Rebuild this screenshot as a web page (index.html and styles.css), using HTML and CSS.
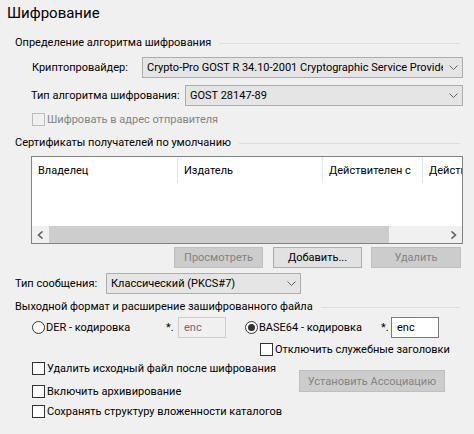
FILE: index.html
```html
<!DOCTYPE html>
<html lang="ru">
<head>
<meta charset="utf-8">
<link rel="stylesheet" href="styles.css">
</head>
<body>
<div class="page">
  <h1 class="title">Шифрование</h1>

  <div class="group-head group-head-1"><span>Определение алгоритма шифрования</span><i class="rule"></i></div>

  <div class="row row-provider">
    <span class="label">Криптопровайдер:</span>
    <div class="combo combo-provider"><span class="combo-text">Crypto-Pro GOST R 34.10-2001 Cryptographic Service Provider</span><svg class="chev" width="9" height="5" viewBox="0 0 9 5"><polyline points="0.5,0.5 4.5,4.5 8.5,0.5" fill="none" stroke="#606060" stroke-width="1"/></svg></div>
  </div>

  <div class="row row-alg">
    <span class="label">Тип алгоритма шифрования:</span>
    <div class="combo combo-alg"><span class="combo-text">GOST 28147-89</span><svg class="chev" width="9" height="5" viewBox="0 0 9 5"><polyline points="0.5,0.5 4.5,4.5 8.5,0.5" fill="none" stroke="#606060" stroke-width="1"/></svg></div>
  </div>

  <label class="check check-disabled check-sender"><span class="box"></span><span>Шифровать в адрес отправителя</span></label>

  <div class="group-head group-head-2"><span>Сертификаты получателей по умолчанию</span><i class="rule"></i></div>

  <div class="list">
    <div class="list-head">
      <div class="col col-1">Владелец</div>
      <div class="col col-2">Издатель</div>
      <div class="col col-3">Действителен с</div>
      <div class="col col-4">Действителен по</div>
    </div>
    <div class="list-body"></div>
    <div class="hscroll">
      <div class="arrow arrow-left"><svg width="7" height="8" viewBox="0 0 7 8"><polyline points="5.5,0.5 1.5,4 5.5,7.5" fill="none" stroke="#606060" stroke-width="1.6"/></svg></div>
      <div class="thumb"></div>
      <div class="track"></div>
      <div class="arrow arrow-right"><svg width="7" height="8" viewBox="0 0 7 8"><polyline points="1.5,0.5 5.5,4 1.5,7.5" fill="none" stroke="#606060" stroke-width="1.6"/></svg></div>
    </div>
  </div>

  <div class="btn-row">
    <div class="btn btn-disabled btn-view">Просмотреть</div>
    <div class="btn btn-add">Добавить...</div>
    <div class="btn btn-disabled btn-del">Удалить</div>
  </div>

  <div class="row row-msg">
    <span class="label">Тип сообщения:</span>
    <div class="combo combo-msg"><span class="combo-text">Классический (PKCS#7)</span><svg class="chev" width="9" height="5" viewBox="0 0 9 5"><polyline points="0.5,0.5 4.5,4.5 8.5,0.5" fill="none" stroke="#606060" stroke-width="1"/></svg></div>
  </div>

  <div class="group-head group-head-3"><span>Выходной формат и расширение зашифрованного файла</span><i class="rule"></i></div>

  <div class="format-row">
    <label class="radio radio-der"><span class="circle"></span><span>DER - кодировка</span></label>
    <span class="ext-star ext-star-der">*.</span>
    <div class="ext ext-disabled">enc</div>
    <label class="radio radio-b64"><span class="circle checked"></span><span>BASE64 - кодировка</span></label>
    <span class="ext-star ext-star-b64">*.</span>
    <div class="ext ext-active">enc</div>
  </div>

  <label class="check check-headers"><span class="box"></span><span>Отключить служебные заголовки</span></label>

  <div class="options">
    <div class="opt-col">
      <label class="check check-opt1"><span class="box"></span><span>Удалить исходный файл после шифрования</span></label>
      <label class="check check-opt2"><span class="box"></span><span>Включить архивирование</span></label>
      <label class="check check-opt3"><span class="box"></span><span>Сохранять структуру вложенности каталогов</span></label>
    </div>
    <div class="btn btn-disabled btn-assoc">Установить Ассоциацию</div>
  </div>
</div>
</body>
</html>
```

FILE: styles.css
```css
html, body {
  margin: 0;
  padding: 0;
  background: #f0f0f0;
}
body {
  width: 474px;
  height: 434px;
  overflow: hidden;
  font-family: Roboto, "Liberation Sans", sans-serif;
  font-size: 11px;
  color: #000;
}
.page {
  display: flex;
  flex-direction: column;
}
.title {
  box-sizing: border-box;
  margin: 0;
  padding: 2px 0 0 7px;
  height: 30px;
  font-size: 15px;
  font-weight: normal;
  line-height: 22px;
}

.group-head {
  display: flex;
  align-items: center;
  padding-left: 15px;
  padding-right: 14px;
  height: 16px;
  line-height: 16px;
  white-space: nowrap;
  flex: none;
}
.group-head .rule {
  flex: 1;
  height: 1px;
  background: #dcdcdc;
  margin-left: 8px;
  margin-top: 1px;
}
.group-head-1 { margin-top: 5px; }
.group-head-2 { margin-top: 9px; }
.group-head-3 { margin-top: 5px; }

.row {
  display: flex;
  align-items: center;
  white-space: nowrap;
  height: 21px;
  flex: none;
}
.label { display: block; flex: none; }
.row-provider { margin-top: 6px; padding-left: 32px; }
.row-provider .label { width: 110px; }
.row-alg { margin-top: 7px; padding-left: 31px; }
.row-alg .label { width: 154px; }
.row-msg { margin-top: 5px; padding-left: 15px; }
.row-msg .label { width: 91px; }

.combo {
  box-sizing: border-box;
  height: 21px;
  border: 1px solid #adadad;
  background: #e5e5e5;
  display: flex;
  align-items: center;
  padding-left: 4px;
  padding-right: 4px;
  overflow: hidden;
  flex: none;
}
.combo-text {
  flex: 1;
  overflow: hidden;
  white-space: nowrap;
}
.chev { flex: none; margin-left: 6px; }
.combo-provider { width: 321px; }
.combo-alg { width: 278px; }
.combo-msg { width: 195px; }

.check, .radio {
  display: flex;
  align-items: center;
  white-space: nowrap;
  height: 13px;
  line-height: 13px;
  flex: none;
}
.check .box {
  box-sizing: border-box;
  width: 13px;
  height: 13px;
  border: 1px solid #333;
  background: #fff;
  margin-right: 2px;
  flex: none;
}
.check-disabled { color: #838383; }
.check-disabled .box { border-color: #bcbcbc; background: #f0f0f0; }
.check-sender { margin-top: 7px; margin-left: 32px; }

.list {
  box-sizing: border-box;
  margin: 5px 0 0 31px;
  width: 432px;
  height: 88px;
  border: 1px solid #828282;
  background: #fff;
  display: flex;
  flex-direction: column;
  overflow: hidden;
  flex: none;
}
.list-head {
  display: flex;
  height: 26px;
  flex: none;
  white-space: nowrap;
}
.col {
  box-sizing: border-box;
  flex: none;
  padding-left: 6px;
  padding-top: 7px;
  border-right: 1px solid #e5e5e5;
  overflow: hidden;
  height: 26px;
}
.col-1 { width: 146px; }
.col-2 { width: 145px; }
.col-3 { width: 100px; }
.col-4 { width: 80px; border-right: none; }
.list-body { flex: 1; }
.hscroll {
  flex: none;
  height: 17px;
  display: flex;
  background: #f0f0f0;
}
.arrow {
  width: 17px;
  display: flex;
  align-items: center;
  justify-content: center;
  flex: none;
}
.thumb {
  width: 340px;
  background: #cdcdcd;
  flex: none;
}
.track { flex: 1; }

.btn-row {
  display: flex;
  margin-top: 3px;
  padding-left: 174px;
  gap: 10px;
  flex: none;
}
.btn {
  box-sizing: border-box;
  height: 21px;
  display: flex;
  align-items: center;
  justify-content: center;
  border: 1px solid #adadad;
  background: #e1e1e1;
  white-space: nowrap;
  flex: none;
}
.btn-disabled {
  background: #cccccc;
  border-color: #bfbfbf;
  color: #838383;
}
.btn-view { width: 89px; }
.btn-add { width: 89px; }
.btn-del { width: 90px; margin-left: -1px; }

.format-row {
  display: flex;
  align-items: center;
  margin-top: 2px;
  height: 21px;
  white-space: nowrap;
  flex: none;
}
.radio .circle {
  box-sizing: border-box;
  width: 13px;
  height: 13px;
  border: 1px solid #333;
  border-radius: 50%;
  background: #fff;
  margin-right: 1px;
  flex: none;
  display: flex;
  align-items: center;
  justify-content: center;
}
.radio .circle.checked::after {
  content: "";
  width: 7px;
  height: 7px;
  border-radius: 50%;
  background: #333;
}
.radio-der { margin-left: 32px; width: 134px; }
.radio-b64 { margin-left: 19px; width: 136px; }
.ext-star { width: 12px; flex: none; }
.ext-star-b64 { width: 10px; }
.ext {
  box-sizing: border-box;
  height: 21px;
  width: 48px;
  padding-left: 5px;
  line-height: 19px;
  flex: none;
}
.ext-disabled {
  border: 1px solid #cccccc;
  background: #f0f0f0;
  color: #6d6d6d;
}
.ext-active {
  border: 1px solid #7a7a7a;
  background: #fff;
}

.check-headers { margin-top: 5px; margin-left: 260px; }

.options {
  display: flex;
  margin-top: 6px;
  flex: none;
}
.opt-col {
  display: flex;
  flex-direction: column;
  padding-left: 32px;
  width: 267px;
}
.check-opt2 { margin-top: 10px; }
.check-opt3 { margin-top: 7px; }
.btn-assoc {
  width: 146px;
  height: 22px;
  margin-top: 8px;
}
```
